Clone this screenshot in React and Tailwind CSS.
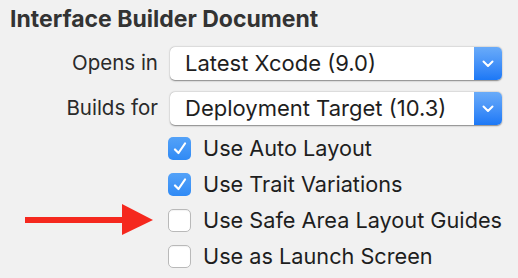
import React from 'react';

const font = { fontFamily: 'Inter, "Noto Sans", sans-serif' };

const Chevron = () => (
    <svg width="12" height="8" viewBox="0 0 12 8" fill="none">
        <path d="M1.5 1.5 L6 6 L10.5 1.5" stroke="white" strokeWidth="2" strokeLinecap="round" strokeLinejoin="round" />
    </svg>
);

const Check = () => (
    <svg width="14" height="13" viewBox="0 0 14 13" fill="none">
        <path d="M2 7.5 L5.5 11 L12 1.5" stroke="white" strokeWidth="2.2" strokeLinecap="round" strokeLinejoin="round" />
    </svg>
);

const Arrow = () => (
    <svg width="130" height="32" viewBox="0 0 130 32">
        <rect x="0" y="13" width="100" height="6" fill="#f5281e" />
        <polygon points="97,0 128,16 97,31" fill="#f5281e" />
    </svg>
);

const Popup = ({ value }) => (
    <div className="flex h-[33px] w-[332px] rounded-[5px] bg-white shadow-[0_0.5px_1.5px_rgba(0,0,0,0.45)] overflow-hidden">
        <div className="flex-1 flex items-center pl-[15px] text-[22px] leading-[33px] text-[#1e1e1e]">{value}</div>
        <div className="w-[28px] flex items-center justify-center bg-gradient-to-b from-[#69abf9] to-[#1b78f6]">
            <Chevron />
        </div>
    </div>
);

const CheckRow = ({ checked, label, arrow }) => (
    <div className="flex items-center h-[36px]">
        <div className="w-[168px] flex items-center">
            {arrow && <div className="ml-[25px]"><Arrow /></div>}
        </div>
        {checked ? (
            <div className="w-[23px] h-[23px] rounded-[5px] bg-gradient-to-b from-[#54a2f8] to-[#2f8af5] flex items-center justify-center">
                <Check />
            </div>
        ) : (
            <div className="w-[23px] h-[23px] rounded-[5px] bg-white border border-[#b9b9b9] shadow-[inset_0_1px_1px_rgba(0,0,0,0.05)]" />
        )}
        <span className="ml-[12px] text-[21.7px] leading-[30px] text-[#1e1e1e]">{label}</span>
    </div>
);

const App = () => {
    return (
        <div className="w-[518px] h-[278px] bg-[#f1f1f1] overflow-hidden" style={font}>
            <div className="pl-[10px] pt-[6px] text-[23px] font-bold text-[#333] leading-[26px]">
                Interface Builder Document
            </div>
            <div className="mt-[15px] flex flex-col gap-[12px]">
                <div className="flex items-center">
                    <div className="w-[158px] text-right text-[20.5px] text-[#2a2a2a]">Opens in</div>
                    <div className="ml-[12px]"><Popup value="Latest Xcode (9.0)" /></div>
                </div>
                <div className="flex items-center">
                    <div className="w-[158px] text-right text-[20.5px] text-[#2a2a2a]">Builds for</div>
                    <div className="ml-[12px]"><Popup value="Deployment Target (10.3)" /></div>
                </div>
            </div>
            <div className="mt-[5px]">
                <CheckRow checked label="Use Auto Layout" />
                <CheckRow checked label="Use Trait Variations" />
                <CheckRow label="Use Safe Area Layout Guides" arrow />
                <CheckRow label="Use as Launch Screen" />
            </div>
        </div>
    );
};

export default App;
